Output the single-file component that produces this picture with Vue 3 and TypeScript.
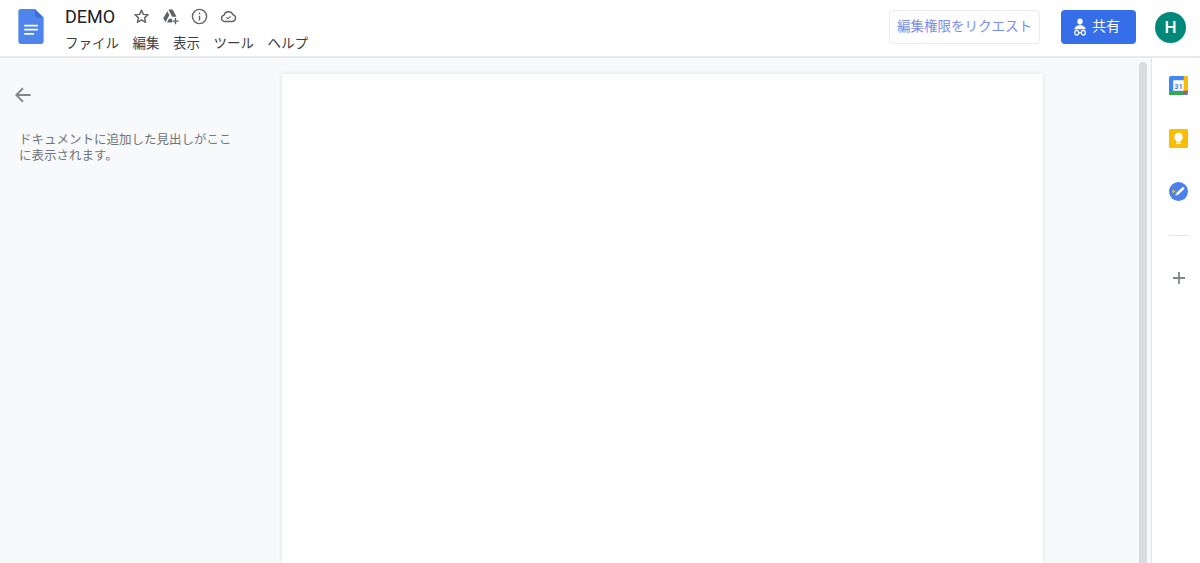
<script setup lang="ts">
const menus = ['ファイル', '編集', '表示', 'ツール', 'ヘルプ'];
</script>

<template>
	<div class="docs">
		<header class="topbar">
			<svg class="docs-logo" width="26" height="35" viewBox="0 0 26 36">
				<path d="M2.5 0H17l9 9v24.5a2.5 2.5 0 0 1-2.5 2.5h-21A2.5 2.5 0 0 1 0 33.500v-31A2.500 2.500 0 0 1 2.500 0z" fill="#4f84ec" />
				<path d="M17 0l9 9h-6.500A2.500 2.500 0 0 1 17 6.500z" fill="#3a6fd8" />
				<path d="M6 17h14M6 21.200h14M6 25.500h10" stroke="#fff" stroke-width="1.800" />
			</svg>
			<div class="title-block">
				<div class="title-row">
					<span class="doc-name">DEMO</span>
					<div class="title-icons">
						<svg width="17" height="17" viewBox="0 0 24 24" fill="none" stroke="#5f6368" stroke-width="2" stroke-linejoin="round">
							<path d="M12 3l2.700 6 6.500.6-4.900 4.300 1.500 6.400L12 16.900l-5.800 3.400 1.500-6.400-4.900-4.300 6.500-.6z" />
						</svg>
						<svg width="17" height="17" viewBox="0 0 24 24" fill="#5f6368">
							<path d="M9 2h6l5.500 10.500h-6.200zM7.500 4.500l3 5.500L5 20l-3.300-5.500zM7 20.500l3-5.500h4v5.500z" />
							<path d="M18 14h2v3.500h3.500v2H20V23h-2v-3.500h-3.500v-2H18z" />
						</svg>
						<svg width="17" height="17" viewBox="0 0 24 24" fill="none" stroke="#5f6368" stroke-width="2">
							<circle cx="12" cy="12" r="10" />
							<path d="M12 11v6.500M12 6.500v2.200" />
						</svg>
						<svg width="17" height="17" viewBox="0 0 24 24" fill="none" stroke="#5f6368" stroke-width="2">
							<path d="M6.500 19a4.500 4.500 0 0 1-.8-8.900A6.500 6.500 0 0 1 18 9.300a4.900 4.900 0 0 1-.5 9.700z" />
							<path d="M9 13.500l2 1.500 4-3" stroke-width="1.600" />
						</svg>
					</div>
				</div>
				<nav class="menu">
					<span v-for="item in menus" :key="item">{{ item }}</span>
				</nav>
			</div>
			<div class="actions">
				<button class="request-btn">編集権限をリクエスト</button>
				<button class="share-btn">
					<svg width="14" height="18" viewBox="0 0 14 16" preserveAspectRatio="none" fill="#fff">
						<circle cx="7" cy="3.200" r="2.700" />
						<path d="M1.500 10c0-2.500 3-3.500 5.500-3.500s5.500 1 5.500 3.500z" />
						<circle cx="3.700" cy="13" r="2" fill="none" stroke="#fff" stroke-width="1.200" />
						<circle cx="10.300" cy="13" r="2" fill="none" stroke="#fff" stroke-width="1.200" />
						<path d="M5.500 13h3" stroke="#fff" stroke-width="1.200" />
					</svg>
					<span>共有</span>
				</button>
				<div class="avatar">H</div>
			</div>
		</header>

		<div class="body">
			<main class="workspace">
				<aside class="outline">
					<svg class="back" width="18" height="18" viewBox="0 0 20 20" fill="none" stroke="#80868b" stroke-width="2">
						<path d="M18.500 10H3M10 2.500L2.500 10l7.500 7.500" />
					</svg>
					<p class="outline-hint">ドキュメントに追加した見出しがここに表示されます。</p>
				</aside>
				<div class="page-area">
					<div class="page"></div>
				</div>
				<div class="scroll-track">
					<div class="scroll-thumb"></div>
				</div>
			</main>

			<aside class="side-panel">
				<svg width="19" height="19" viewBox="0 0 18 18">
					<rect width="18" height="18" rx="1.500" fill="#4285f4" />
					<rect x="14" width="4" height="14" fill="#fbbc04" />
					<rect y="14" width="14" height="4" fill="#34a853" />
					<path d="M14 14h4l-4 4z" fill="#ea4335" />
					<rect x="4" y="4" width="10" height="10" fill="#fff" />
					<text x="9" y="12" text-anchor="middle" class="cal-num">31</text>
				</svg>
				<svg width="19" height="19" viewBox="0 0 18 18">
					<rect width="18" height="18" rx="1.500" fill="#fbbc04" />
					<path d="M9 3.500a4 4 0 0 1 2.300 7.300v1.200H6.700v-1.200A4 4 0 0 1 9 3.500z" fill="#fff" />
					<rect x="6.900" y="12.800" width="4.200" height="1.500" fill="#fff" />
				</svg>
				<svg width="19" height="19" viewBox="0 0 18 18">
					<circle cx="9" cy="9" r="9" fill="#4c80ec" />
					<path d="M7.500 11.500L14 5.500" stroke="#fff" stroke-width="2.400" />
					<path d="M6 11.500h3L6.500 13z" fill="#fff" />
					<circle cx="4.300" cy="9" r="1.400" fill="#fbbc04" />
				</svg>
				<div class="divider"></div>
				<svg class="add" width="14" height="14" viewBox="0 0 14 14" stroke="#80868b" stroke-width="1.800">
					<path d="M7 1v12M1 7h12" />
				</svg>
			</aside>
		</div>
	</div>
</template>

<style scoped>
.docs {
	width: 1200px;
	height: 563px;
	overflow: hidden;
	display: flex;
	flex-direction: column;
	background: #fff;
	font-family: Roboto, "Noto Sans CJK JP", sans-serif;
}

.topbar {
	height: 58px;
	flex: none;
	display: flex;
	align-items: flex-start;
	box-sizing: border-box;
	padding-left: 18px;
	background: #fff;
	border-bottom: 2px solid #e8e9eb;
}

.docs-logo {
	margin-top: 9px;
}

.title-block {
	margin-left: 21px;
	padding-top: 6px;
}

.title-row {
	display: flex;
	align-items: center;
	height: 21px;
}

.doc-name {
	font-size: 18px;
	color: #202124;
}

.title-icons {
	display: flex;
	align-items: center;
	gap: 12px;
	margin-left: 18px;
}

.menu {
	display: flex;
	gap: 13.500px;
	margin-top: 6px;
	font-size: 13.500px;
	line-height: 20px;
	color: #3c4043;
}

.actions {
	margin-left: auto;
	display: flex;
	align-items: center;
	padding-top: 10px;
	padding-right: 14px;
}

.request-btn {
	width: 151px;
	height: 34px;
	padding: 0 0 4px;
	background: #fff;
	border: 1px solid #e8eaed;
	border-radius: 4px;
	color: #7b8cf0;
	font: 13.500px Roboto, "Noto Sans CJK JP", sans-serif;
}

.share-btn {
	width: 75px;
	height: 34px;
	margin-left: 21px;
	padding: 0 4px 0 0;
	display: flex;
	align-items: center;
	justify-content: center;
	gap: 5px;
	background: #366de8;
	border: none;
	border-radius: 4px;
	color: #fff;
	font: 14px Roboto, "Noto Sans CJK JP", sans-serif;
}

.share-btn span {
	margin-top: -4px;
}

.avatar {
	width: 31px;
	height: 31px;
	margin-left: 19px;
	border-radius: 50%;
	background: #00897b;
	color: #fff;
	font-size: 17px;
	font-weight: 500;
	line-height: 31px;
	text-align: center;
}

.body {
	flex: 1;
	min-height: 0;
	display: flex;
}

.workspace {
	flex: 1;
	display: flex;
	background: #f8f9fb;
}

.outline {
	width: 282px;
	flex: none;
	box-sizing: border-box;
	padding: 28px 0 0 14px;
}

.back {
	display: block;
}

.outline-hint {
	width: 216px;
	margin: 28px 0 0 5px;
	font-size: 12.500px;
	line-height: 16px;
	color: #70757a;
}

.page-area {
	flex: 1;
	padding-top: 16px;
}

.page {
	width: 761px;
	height: 100%;
	background: #fff;
	box-shadow: 0 0 4px rgba(60, 64, 67, 0.15);
}

.scroll-track {
	width: 8px;
	flex: none;
	margin-right: 4px;
	padding-top: 4px;
}

.scroll-thumb {
	height: 100%;
	background: #dadce0;
	border-radius: 4px 4px 0 0;
}

.side-panel {
	width: 49px;
	flex: none;
	box-sizing: border-box;
	padding: 18px 0 0 5px;
	display: flex;
	flex-direction: column;
	align-items: center;
	gap: 34px;
	background: #fff;
	border-left: 1px solid #e3e4e6;
}

.divider {
	width: 20px;
	height: 1px;
	background: #e3e4e6;
}

.add {
	margin-top: 1px;
}

.cal-num {
	font: 700 7px Roboto, sans-serif;
	fill: #4285f4;
}
</style>
